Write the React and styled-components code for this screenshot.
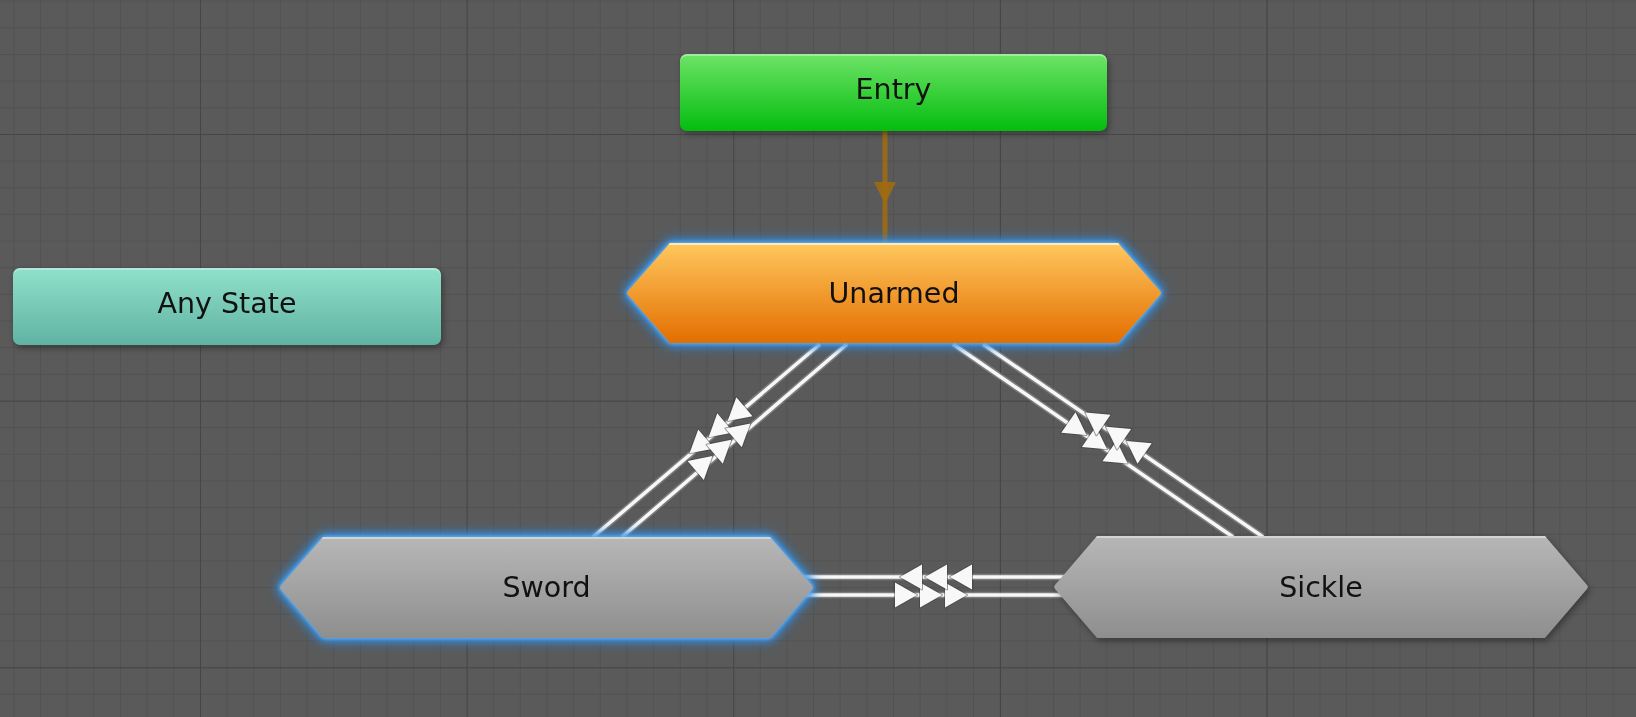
import styled, { createGlobalStyle } from "styled-components";

const GlobalStyle = createGlobalStyle`
  html, body {
    margin: 0;
    padding: 0;
    background: #5a5a5a;
    overflow: hidden;
  }
`;

const Canvas = styled.div`
  position: relative;
  width: 1636px;
  height: 717px;
  overflow: hidden;
  background-color: #5a5a5a;
  background-image:
    linear-gradient(to right, #464646 1px, transparent 1px),
    linear-gradient(to bottom, #464646 1px, transparent 1px),
    linear-gradient(to right, #525252 1px, transparent 1px),
    linear-gradient(to bottom, #525252 1px, transparent 1px);
  background-size: 266.667px 266.667px, 266.667px 266.667px, 26.667px 26.667px, 26.667px 26.667px;
  background-position: 200px 134px, 200px 134px, 13.333px 0.667px, 13.333px 0.667px;
  font-family: "DejaVu Sans", "Noto Sans", sans-serif;
`;

const Wires = styled.svg`
  position: absolute;
  inset: 0;
  width: 100%;
  height: 100%;
  pointer-events: none;
`;

const palette = {
  entry: ["#6ee368", "#04bd0e", "rgba(255,255,255,0.35)"],
  any: ["#90e1ca", "#60b3a3", "rgba(255,255,255,0.3)"],
  default: ["#ffc85e", "#e36e00", "rgba(255,240,200,0.85)"],
  state: ["#b7b7b7", "#8e8e8e", "rgba(255,255,255,0.4)"],
};

const NodeSlot = styled.div`
  position: absolute;
  left: ${(p) => p.$x}px;
  top: ${(p) => p.$y}px;
  width: ${(p) => p.$w}px;
  height: ${(p) => p.$h}px;
  filter: ${(p) =>
    p.$selected
      ? "drop-shadow(0 0 2px #7cc4ff) drop-shadow(0 0 4px #3895ec) drop-shadow(0 0 6px #2a86dc)"
      : "drop-shadow(2px 3px 3px rgba(0,0,0,0.35))"};
`;

const NodeBody = styled.div`
  width: 100%;
  height: 100%;
  display: flex;
  align-items: center;
  justify-content: center;
  box-sizing: border-box;
  padding-bottom: ${(p) => (p.$hex ? "0" : "7px")};
  background: linear-gradient(to bottom, ${(p) => palette[p.$kind][0]}, ${(p) => palette[p.$kind][1]});
  box-shadow: inset 0 2px 0 ${(p) => palette[p.$kind][2]};
  border-radius: ${(p) => (p.$hex ? "0" : "7px")};
  clip-path: ${(p) =>
    p.$hex
      ? "polygon(43px 0, calc(100% - 43px) 0, calc(100% - 1px) 48%, 100% 50%, calc(100% - 1px) 52%, calc(100% - 43px) 100%, 43px 100%, 1px 52%, 0 50%, 1px 48%)"
      : "none"};
  color: #111;
  font-size: 28.5px;
  user-select: none;
`;

const StateNode = ({ x, y, w, h, kind, hex, selected, children }) => (
  <NodeSlot $x={x} $y={y} $w={w} $h={h} $selected={selected}>
    <NodeBody $kind={kind} $hex={hex}>
      {children}
    </NodeBody>
  </NodeSlot>
);

const Heads = ({ at, dir, count, color, len, half, gap = 25 }) => {
  const [ux, uy] = dir;
  const px = -uy;
  const py = ux;
  const offsets = count === 3 ? [-1, 0, 1] : [0];
  return offsets.map((k) => {
    const cx = at[0] + ux * gap * k;
    const cy = at[1] + uy * gap * k;
    const pts = [
      [cx + ux * len * 0.5, cy + uy * len * 0.5],
      [cx - ux * len * 0.5 + px * half, cy - uy * len * 0.5 + py * half],
      [cx - ux * len * 0.5 - px * half, cy - uy * len * 0.5 - py * half],
    ];
    return (
      <polygon
        key={k}
        points={pts.map((q) => q.join(",")).join(" ")}
        fill={color}
        stroke={count === 3 ? "rgba(60,60,60,0.5)" : "none"}
        strokeWidth="2"
        strokeLinejoin="round"
        paintOrder="stroke"
      />
    );
  });
};

const Transition = ({ from, to, at, count = 3, color = "#f8f8f8", width = 3.5, len = 22, half = 12.5 }) => {
  const dx = to[0] - from[0];
  const dy = to[1] - from[1];
  const l = Math.hypot(dx, dy);
  const dir = [dx / l, dy / l];
  return (
    <g>
      {count === 3 && (
        <line x1={from[0]} y1={from[1]} x2={to[0]} y2={to[1]} stroke="rgba(255,255,255,0.22)" strokeWidth={width + 3} />
      )}
      <line x1={from[0]} y1={from[1]} x2={to[0]} y2={to[1]} stroke={color} strokeWidth={width} />
      <Heads at={at} dir={dir} count={count} color={color} len={len} half={half} />
    </g>
  );
};

const transitions = [
  { from: [820, 344], to: [593, 537], at: [717, 430] },
  { from: [622, 537], to: [847, 344], at: [723, 447] },
  { from: [953, 344], to: [1233, 537], at: [1098, 443] },
  { from: [1263, 537], to: [983, 344], at: [1115, 433] },
  { from: [800, 595], to: [1070, 595], at: [931, 595] },
  { from: [1070, 577], to: [800, 577], at: [936, 577] },
];

export default function App() {
  return (
    <>
      <GlobalStyle />
      <Canvas>
        <Wires viewBox="0 0 1636 717">
          <Transition
            from={[885, 131]}
            to={[885, 244]}
            at={[885, 193]}
            count={1}
            color="rgba(158,108,16,0.9)"
            width={5}
            len={22}
            half={11}
          />
          {transitions.map((t, i) => (
            <Transition key={i} {...t} />
          ))}
        </Wires>
        <StateNode x={680} y={54} w={427} h={77} kind="entry">Entry</StateNode>
        <StateNode x={13} y={268} w={428} h={77} kind="any">Any State</StateNode>
        <StateNode x={627} y={243} w={534} h={100} kind="default" hex selected>Unarmed</StateNode>
        <StateNode x={280} y={537} w={533} h={101} kind="state" hex selected>Sword</StateNode>
        <StateNode x={1054} y={536} w={534} h={102} kind="state" hex>Sickle</StateNode>
      </Canvas>
    </>
  );
}
